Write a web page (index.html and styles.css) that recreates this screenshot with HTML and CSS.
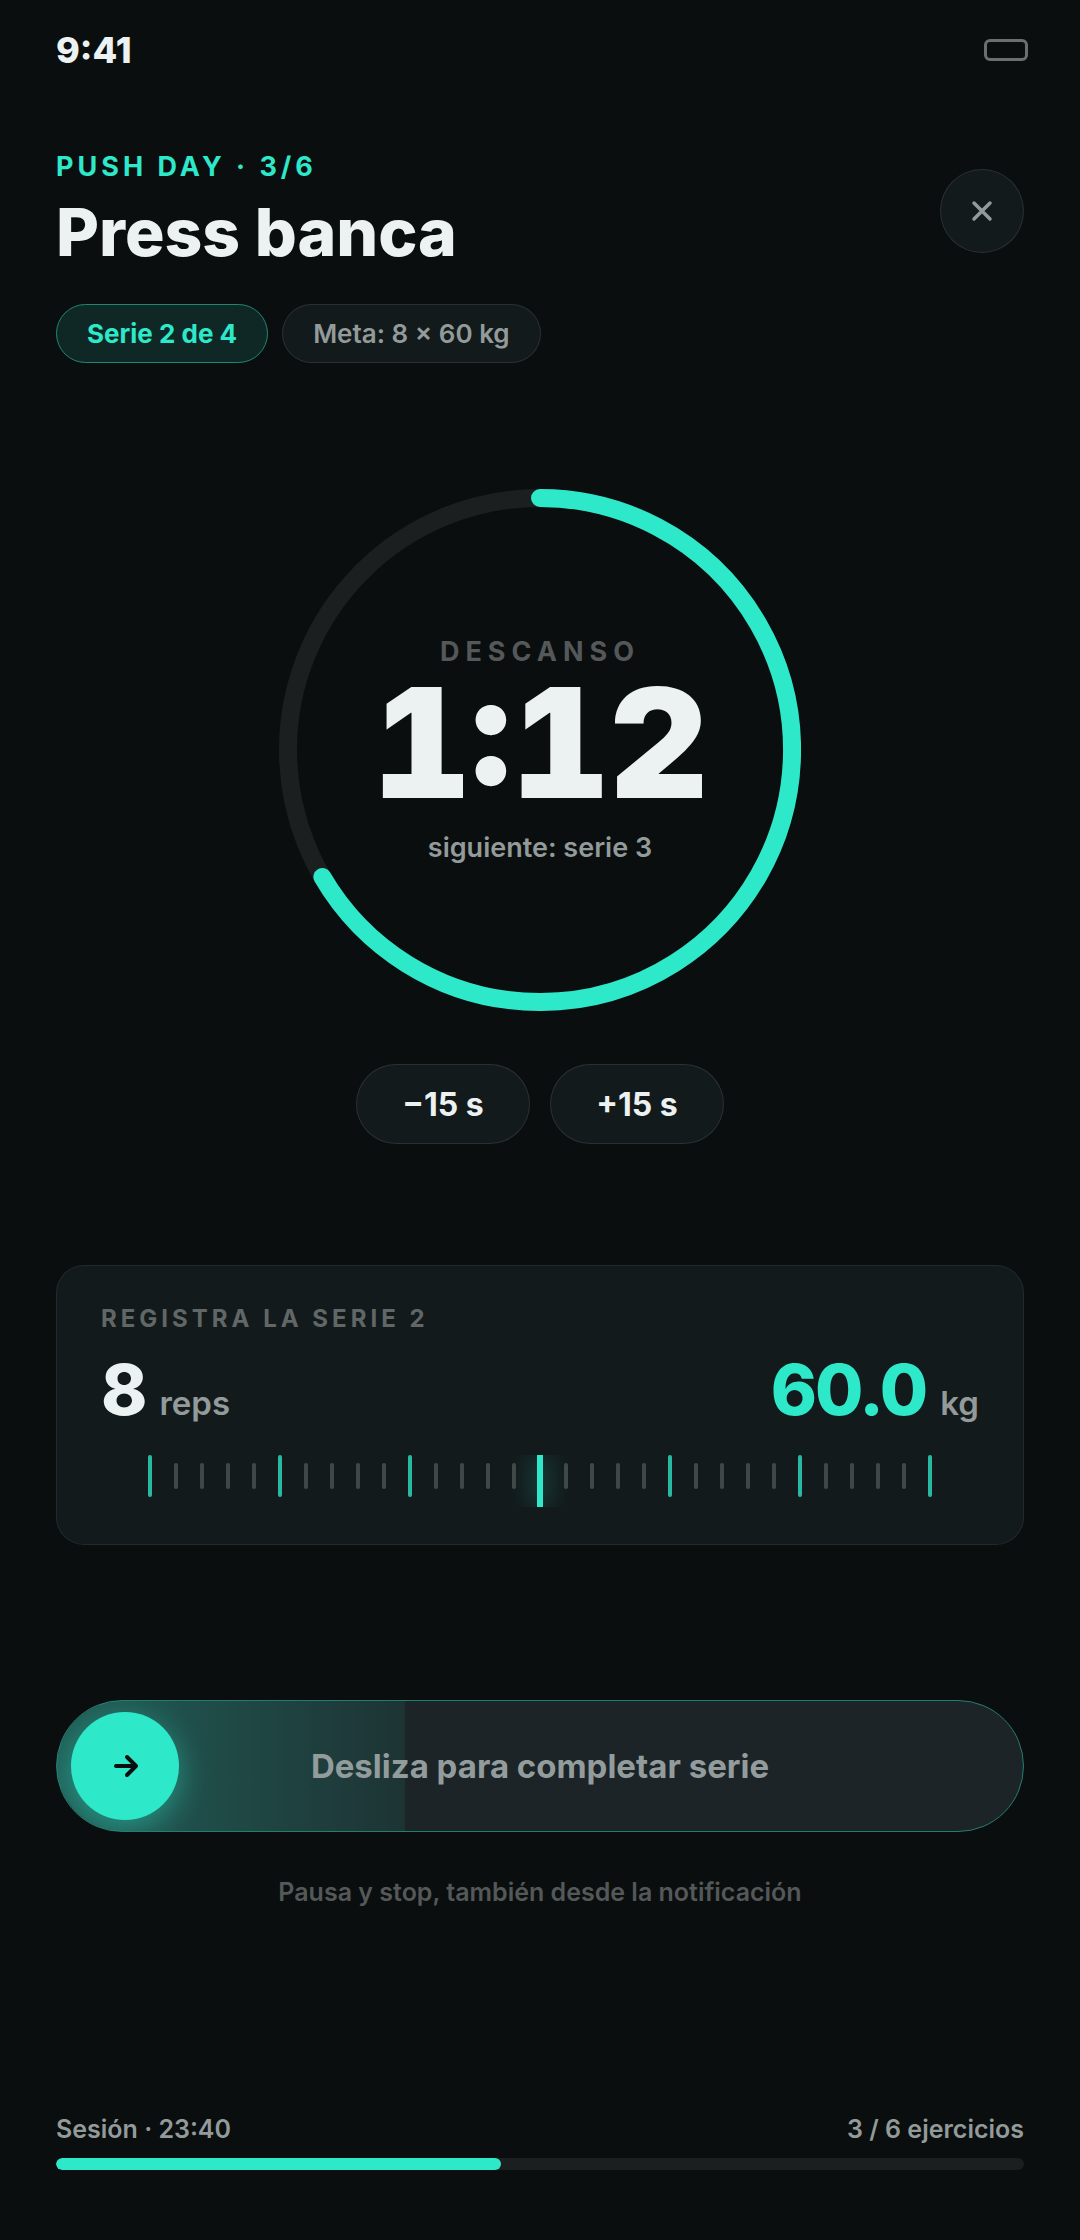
FILE: index.html
```html
<!DOCTYPE html>
<html lang="es">
<head>
    <meta charset="UTF-8">
    <meta name="viewport" content="width=device-width, initial-scale=1.0">
    <title>Press banca</title>
    <link rel="stylesheet" href="styles.css">
</head>
<body>
    <div class="screen">
        <div class="status-bar">
            <span>9:41</span>
            <span class="battery"></span>
        </div>

        <header class="header">
            <div>
                <p class="eyebrow">PUSH DAY · 3/6</p>
                <h1>Press banca</h1>
            </div>
            <button type="button" class="close" aria-label="Cerrar">
                <svg width="24" height="24" viewBox="0 0 24 24" fill="none" stroke="currentColor" stroke-width="3.5" stroke-linecap="round">
                    <path d="M4 4l16 16M20 4L4 20"/>
                </svg>
            </button>
        </header>

        <div class="chips">
            <span class="chip active">Serie 2 de 4</span>
            <span class="chip">Meta: 8 × 60 kg</span>
        </div>

        <section class="timer">
            <svg class="ring" viewBox="0 0 522 522" fill="none" stroke-width="18">
                <circle class="ring-track" cx="261" cy="261" r="252"/>
                <path class="ring-value" d="M261 9A252 252 0 1 1 43.4 388"/>
            </svg>
            <div class="timer-text">
                <p class="timer-label">DESCANSO</p>
                <p class="timer-value">1:12</p>
                <p class="timer-next">siguiente: serie 3</p>
            </div>
        </section>

        <div class="adjust">
            <button type="button">−15 s</button>
            <button type="button">+15 s</button>
        </div>

        <section class="card">
            <h2>REGISTRA LA SERIE 2</h2>
            <div class="values">
                <p class="value"><strong>8</strong> <span>reps</span></p>
                <label class="value" for="weight"><strong class="accent">60.0</strong> <span>kg</span></label>
            </div>
            <div class="ruler">
                <svg width="784" height="52">
                    <defs>
                        <pattern id="minor" width="26" height="52" patternUnits="userSpaceOnUse">
                            <rect class="tick" y="8" width="4" height="26" rx="2"/>
                        </pattern>
                        <pattern id="major" width="130" height="52" patternUnits="userSpaceOnUse">
                            <rect class="tick-gap" width="4" height="52"/>
                            <rect class="tick-major" width="4" height="42" rx="2"/>
                        </pattern>
                    </defs>
                    <rect width="784" height="52" fill="url(#minor)"/>
                    <rect width="784" height="52" fill="url(#major)"/>
                </svg>
                <input type="range" id="weight" min="45" max="75" step="1" value="60">
            </div>
        </section>

        <div class="slide">
            <div class="slide-fill"></div>
            <label for="complete">Desliza para completar serie</label>
            <input type="range" id="complete" min="0" max="100" value="0">
            <svg class="arrow" width="28" height="28" viewBox="0 0 28 28" fill="none" stroke="currentColor" stroke-width="4" stroke-linecap="round" stroke-linejoin="round">
                <path d="M4 14h20M15 5l9 9-9 9"/>
            </svg>
        </div>
        <p class="hint">Pausa y stop, también desde la notificación</p>

        <footer class="footer">
            <div class="footer-row">
                <label for="session">Sesión · 23:40</label>
                <span>3 / 6 ejercicios</span>
            </div>
            <progress id="session" max="100" value="46"></progress>
        </footer>
    </div>
</body>
</html>
```
FILE: styles.css
```css
:root {
    --bg: #0a0e0f;
    --surface: #131a1c;
    --surface-2: #1c2427;
    --text: #ecf1f1;
    --muted: #939b9a;
    --dim: #545858;
    --line: rgba(255, 255, 255, 0.1);
    --track: #1b1f20;
    --accent: #2ee8ca;
}

* {
    box-sizing: border-box;
}

body {
    margin: 0;
    background: var(--bg);
    color: var(--text);
    font-family: Inter, "Liberation Sans", sans-serif;
    font-weight: 600;
}

h1, h2, p {
    margin: 0;
}

button {
    background: var(--surface);
    border: 1px solid var(--line);
    color: var(--text);
    font-family: inherit;
    cursor: pointer;
}

.screen {
    display: flex;
    flex-direction: column;
    min-height: 100vh;
    padding: 28px 56px 70px;
}

.status-bar {
    display: flex;
    align-items: center;
    justify-content: space-between;
    height: 44px;
    font-size: 36px;
    font-weight: 800;
}

.battery {
    width: 44px;
    height: 22px;
    margin-right: -4px;
    border: 3px solid #697170;
    border-radius: 6px;
}

.header {
    display: flex;
    align-items: center;
    justify-content: space-between;
    margin-top: 78px;
}

.eyebrow {
    color: var(--accent);
    font-size: 27px;
    font-weight: 700;
    letter-spacing: 4px;
    line-height: 34px;
}

h1 {
    margin-top: 8px;
    font-size: 66px;
    font-weight: 800;
    line-height: 80px;
}

.close {
    display: flex;
    align-items: center;
    justify-content: center;
    width: 84px;
    height: 84px;
    padding: 0;
    border-radius: 50%;
    color: var(--muted);
}

.chips {
    display: flex;
    gap: 14px;
    margin-top: 32px;
}

.chip {
    padding: 0 30px;
    background: var(--surface);
    border: 1px solid var(--line);
    border-radius: 30px;
    color: var(--muted);
    font-size: 26px;
    line-height: 57px;
}

.chip.active {
    background: #0f2826;
    border-color: #218674;
    color: var(--accent);
    font-weight: 700;
}

.timer {
    display: grid;
    place-items: center;
    margin-top: 126px;
}

.ring,
.timer-text {
    grid-area: 1 / 1;
}

.ring {
    width: 522px;
}

.ring-track {
    stroke: var(--track);
}

.ring-value {
    stroke: var(--accent);
    stroke-linecap: round;
}

.timer-text {
    text-align: center;
}

.timer-label {
    color: var(--dim);
    font-size: 27px;
    font-weight: 700;
    letter-spacing: 6px;
    line-height: 34px;
}

.timer-value {
    font-size: 152px;
    font-weight: 900;
    font-variant-numeric: tabular-nums;
    line-height: 148px;
}

.timer-next {
    margin-top: 14px;
    color: var(--muted);
    font-size: 27px;
    line-height: 34px;
}

.adjust {
    display: flex;
    justify-content: center;
    gap: 20px;
    margin-top: 53px;
}

.adjust button {
    width: 174px;
    height: 80px;
    border-radius: 40px;
    font-size: 32px;
    font-weight: 700;
}

.card {
    margin-top: 121px;
    padding: 36px 44px 37px;
    background: var(--surface);
    border: 1px solid rgba(255, 255, 255, 0.07);
    border-radius: 28px;
}

h2 {
    color: #616767;
    font-size: 24px;
    font-weight: 700;
    letter-spacing: 4px;
    line-height: 34px;
}

.values {
    display: flex;
    justify-content: space-between;
    margin-top: 14px;
    color: var(--muted);
    font-size: 33px;
    line-height: 80px;
}

.value {
    display: flex;
    align-items: baseline;
    gap: 14px;
}

.values strong {
    color: var(--text);
    font-size: 70px;
    font-weight: 800;
    letter-spacing: -2px;
}

.values .accent {
    color: var(--accent);
}

.ruler {
    display: grid;
    justify-content: center;
    margin-top: 12px;
    overflow: hidden;
}

.ruler svg,
.ruler input {
    grid-area: 1 / 1;
}

.tick {
    fill: #414748;
}

.tick-gap {
    fill: var(--surface);
}

.tick-major {
    fill: #28b9a3;
}

input[type="range"] {
    -webkit-appearance: none;
    appearance: none;
    width: 100%;
    margin: 0;
    background: none;
    cursor: pointer;
}

.ruler input::-webkit-slider-thumb {
    -webkit-appearance: none;
    width: 6px;
    height: 52px;
    background: var(--accent);
    box-shadow: 0 0 24px rgba(46, 232, 202, 0.6);
}

.slide {
    display: grid;
    align-items: center;
    height: 132px;
    margin-top: 155px;
    background: var(--surface-2);
    border: 1px solid #247d71;
    border-radius: 66px;
    overflow: hidden;
}

.slide > * {
    grid-area: 1 / 1;
}

.slide-fill {
    width: 36%;
    height: 100%;
    background: linear-gradient(90deg, rgba(46, 232, 202, 0.3), rgba(46, 232, 202, 0.08));
}

.slide label {
    color: #929c9c;
    font-size: 33px;
    font-weight: 700;
    text-align: center;
}

.slide input {
    padding: 0 14px;
}

.slide input::-webkit-slider-thumb {
    -webkit-appearance: none;
    width: 108px;
    height: 108px;
    background: var(--accent);
    border-radius: 50%;
    box-shadow: 0 8px 32px rgba(46, 232, 202, 0.45);
}

.arrow {
    margin-left: 55px;
    color: var(--bg);
    pointer-events: none;
}

.hint {
    margin-top: 43px;
    color: var(--dim);
    font-size: 25px;
    line-height: 34px;
    text-align: center;
}

.footer {
    margin-top: auto;
}

.footer-row {
    display: flex;
    justify-content: space-between;
    color: var(--muted);
    font-size: 25px;
    line-height: 34px;
}

progress {
    -webkit-appearance: none;
    appearance: none;
    display: block;
    width: 100%;
    height: 12px;
    margin-top: 12px;
    border: none;
    border-radius: 6px;
    overflow: hidden;
}

progress::-webkit-progress-bar {
    background: var(--track);
}

progress::-webkit-progress-value {
    background: var(--accent);
    border-radius: 6px;
}
```
